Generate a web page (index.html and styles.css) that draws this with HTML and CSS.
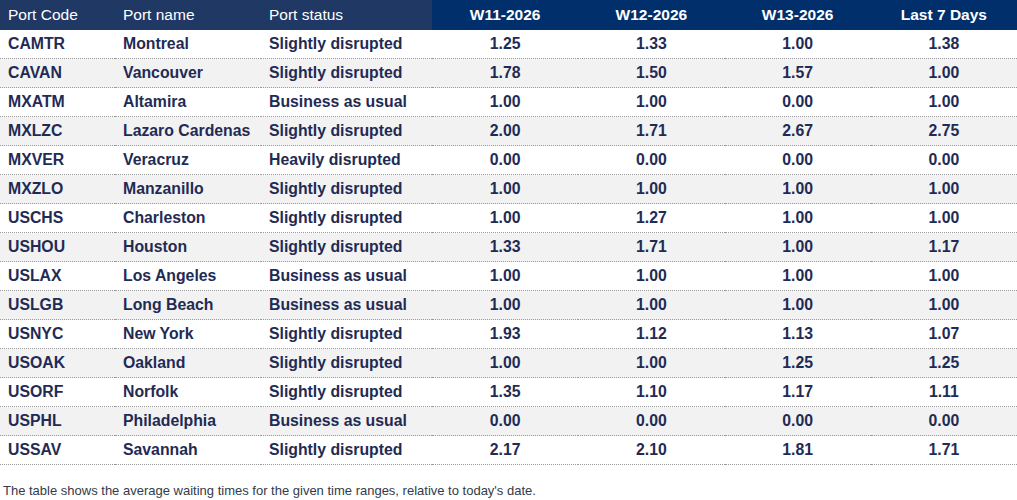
FILE: index.html
```html
<!DOCTYPE html>
<html>
<head>
<meta charset="utf-8">
<link rel="stylesheet" href="styles.css">
</head>
<body>
<table class="ports">
  <colgroup>
    <col class="c-code"><col class="c-name"><col class="c-status">
    <col class="c-num"><col class="c-num"><col class="c-num"><col class="c-num">
  </colgroup>
  <thead>
    <tr>
      <th class="h-left">Port Code</th>
      <th class="h-left">Port name</th>
      <th class="h-left">Port status</th>
      <th class="h-right">W11-2026</th>
      <th class="h-right">W12-2026</th>
      <th class="h-right">W13-2026</th>
      <th class="h-right">Last 7 Days</th>
    </tr>
  </thead>
  <tbody>
    <tr><td>CAMTR</td><td>Montreal</td><td>Slightly disrupted</td><td class="num">1.25</td><td class="num">1.33</td><td class="num">1.00</td><td class="num">1.38</td></tr>
    <tr><td>CAVAN</td><td>Vancouver</td><td>Slightly disrupted</td><td class="num">1.78</td><td class="num">1.50</td><td class="num">1.57</td><td class="num">1.00</td></tr>
    <tr><td>MXATM</td><td>Altamira</td><td>Business as usual</td><td class="num">1.00</td><td class="num">1.00</td><td class="num">0.00</td><td class="num">1.00</td></tr>
    <tr><td>MXLZC</td><td>Lazaro Cardenas</td><td>Slightly disrupted</td><td class="num">2.00</td><td class="num">1.71</td><td class="num">2.67</td><td class="num">2.75</td></tr>
    <tr><td>MXVER</td><td>Veracruz</td><td>Heavily disrupted</td><td class="num">0.00</td><td class="num">0.00</td><td class="num">0.00</td><td class="num">0.00</td></tr>
    <tr><td>MXZLO</td><td>Manzanillo</td><td>Slightly disrupted</td><td class="num">1.00</td><td class="num">1.00</td><td class="num">1.00</td><td class="num">1.00</td></tr>
    <tr><td>USCHS</td><td>Charleston</td><td>Slightly disrupted</td><td class="num">1.00</td><td class="num">1.27</td><td class="num">1.00</td><td class="num">1.00</td></tr>
    <tr><td>USHOU</td><td>Houston</td><td>Slightly disrupted</td><td class="num">1.33</td><td class="num">1.71</td><td class="num">1.00</td><td class="num">1.17</td></tr>
    <tr><td>USLAX</td><td>Los Angeles</td><td>Business as usual</td><td class="num">1.00</td><td class="num">1.00</td><td class="num">1.00</td><td class="num">1.00</td></tr>
    <tr><td>USLGB</td><td>Long Beach</td><td>Business as usual</td><td class="num">1.00</td><td class="num">1.00</td><td class="num">1.00</td><td class="num">1.00</td></tr>
    <tr><td>USNYC</td><td>New York</td><td>Slightly disrupted</td><td class="num">1.93</td><td class="num">1.12</td><td class="num">1.13</td><td class="num">1.07</td></tr>
    <tr><td>USOAK</td><td>Oakland</td><td>Slightly disrupted</td><td class="num">1.00</td><td class="num">1.00</td><td class="num">1.25</td><td class="num">1.25</td></tr>
    <tr><td>USORF</td><td>Norfolk</td><td>Slightly disrupted</td><td class="num">1.35</td><td class="num">1.10</td><td class="num">1.17</td><td class="num">1.11</td></tr>
    <tr><td>USPHL</td><td>Philadelphia</td><td>Business as usual</td><td class="num">0.00</td><td class="num">0.00</td><td class="num">0.00</td><td class="num">0.00</td></tr>
    <tr><td>USSAV</td><td>Savannah</td><td>Slightly disrupted</td><td class="num">2.17</td><td class="num">2.10</td><td class="num">1.81</td><td class="num">1.71</td></tr>
  </tbody>
</table>
<p class="note">The table shows the average waiting times for the given time ranges, relative to today's date.</p>
</body>
</html>
```
FILE: styles.css
```css
html, body {
  margin: 0;
  padding: 0;
  background: #ffffff;
}
body {
  font-family: "Liberation Sans", Arial, sans-serif;
  width: 1017px;
}
.ports {
  width: 1017px;
  border-collapse: collapse;
  table-layout: fixed;
}
.c-code { width: 115px; }
.c-name { width: 146px; }
.c-status { width: 171px; }
.c-num { width: 146.25px; }
th {
  height: 29px;
  padding: 0 0 1px 8px;
  color: #ffffff;
  font-size: 15.5px;
  font-weight: normal;
  text-align: left;
  white-space: nowrap;
}
.h-left {
  background: #203864;
}
.h-right {
  background: #002f6c;
  text-align: center;
  font-weight: bold;
  padding: 0 0 1px 0;
}
td {
  height: 28px;
  padding: 0 0 0 8px;
  font-size: 15.8px;
  font-weight: bold;
  color: #1f2b54;
  border-bottom: 1px dotted #9a9a9a;
  white-space: nowrap;
}
td.num {
  text-align: center;
  padding: 0;
}
tbody tr:nth-child(even) td {
  background: #f2f2f2;
}
.note {
  margin: 18px 0 0 3px;
  font-size: 13px;
  color: #333b4a;
}
```
